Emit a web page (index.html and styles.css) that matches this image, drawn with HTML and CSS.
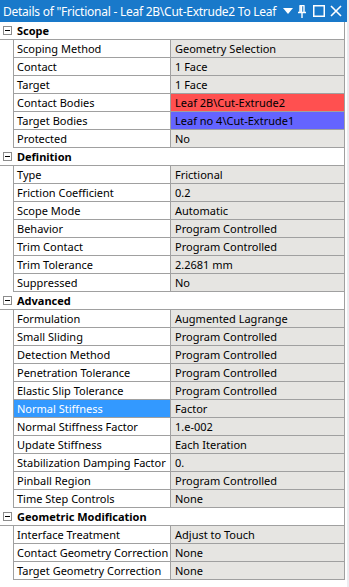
FILE: index.html
```html
<!DOCTYPE html>
<html lang="en">
<head>
    <meta charset="UTF-8">
    <meta name="viewport" content="width=device-width, initial-scale=1.0">
    <title>Details of Frictional contact</title>
    <link rel="stylesheet" href="styles.css">
</head>
<body>
    <div class="panel">
        <div class="titlebar">
            <span class="title">Details of "Frictional - Leaf 2B\Cut-Extrude2 To Leaf</span>
            <div class="tools">
                <svg width="10" height="7" viewBox="0 0 10 7"><path d="M0 0H10L5 6Z" fill="#fff"/></svg>
                <svg width="8" height="13" viewBox="0 0 8 13"><path d="M1.5 0.5H6.5M2 0.5V7M6 0.5V7M0 7.5H8M4 7.5V13M3.5 1V7" stroke="#fff" stroke-width="1.4" fill="none"/></svg>
                <svg class="wide" width="12" height="12" viewBox="0 0 12 12"><rect x="0.75" y="0.75" width="10.5" height="10.5" stroke="#fff" stroke-width="1.5" fill="none"/></svg>
                <svg width="12" height="12" viewBox="0 0 12 12"><path d="M1 1L11 11M11 1L1 11" stroke="#fff" stroke-width="1.6"/></svg>
            </div>
        </div>

        <div class="grid">
            <div class="group-head"><span class="toggle"></span><span class="head-label">Scope</span></div>
            <div class="row"><div class="label">Scoping Method</div><div class="value">Geometry Selection</div></div>
            <div class="row"><div class="label">Contact</div><div class="value">1 Face</div></div>
            <div class="row"><div class="label">Target</div><div class="value">1 Face</div></div>
            <div class="row"><div class="label">Contact Bodies</div><div class="value contact">Leaf 2B\Cut-Extrude2</div></div>
            <div class="row"><div class="label">Target Bodies</div><div class="value target">Leaf no 4\Cut-Extrude1</div></div>
            <div class="row"><div class="label">Protected</div><div class="value">No</div></div>

            <div class="group-head"><span class="toggle"></span><span class="head-label">Definition</span></div>
            <div class="row"><div class="label">Type</div><div class="value">Frictional</div></div>
            <div class="row"><div class="label">Friction Coefficient</div><div class="value">0.2</div></div>
            <div class="row"><div class="label">Scope Mode</div><div class="value">Automatic</div></div>
            <div class="row"><div class="label">Behavior</div><div class="value">Program Controlled</div></div>
            <div class="row"><div class="label">Trim Contact</div><div class="value">Program Controlled</div></div>
            <div class="row"><div class="label">Trim Tolerance</div><div class="value">2.2681 mm</div></div>
            <div class="row"><div class="label">Suppressed</div><div class="value">No</div></div>

            <div class="group-head"><span class="toggle"></span><span class="head-label">Advanced</span></div>
            <div class="row"><div class="label">Formulation</div><div class="value">Augmented Lagrange</div></div>
            <div class="row"><div class="label">Small Sliding</div><div class="value">Program Controlled</div></div>
            <div class="row"><div class="label">Detection Method</div><div class="value">Program Controlled</div></div>
            <div class="row"><div class="label">Penetration Tolerance</div><div class="value">Program Controlled</div></div>
            <div class="row"><div class="label">Elastic Slip Tolerance</div><div class="value">Program Controlled</div></div>
            <div class="row"><div class="label selected">Normal Stiffness</div><div class="value">Factor</div></div>
            <div class="row"><div class="label">Normal Stiffness Factor</div><div class="value">1.e-002</div></div>
            <div class="row"><div class="label">Update Stiffness</div><div class="value">Each Iteration</div></div>
            <div class="row"><div class="label">Stabilization Damping Factor</div><div class="value">0.</div></div>
            <div class="row"><div class="label">Pinball Region</div><div class="value">Program Controlled</div></div>
            <div class="row"><div class="label">Time Step Controls</div><div class="value">None</div></div>

            <div class="group-head"><span class="toggle"></span><span class="head-label">Geometric Modification</span></div>
            <div class="row"><div class="label">Interface Treatment</div><div class="value">Adjust to Touch</div></div>
            <div class="row"><div class="label">Contact Geometry Correction</div><div class="value">None</div></div>
            <div class="row"><div class="label">Target Geometry Correction</div><div class="value">None</div></div>
        </div>
    </div>
</body>
</html>
```

FILE: styles.css
```css
body {
    margin: 0;
    font-family: 'Noto Sans', 'Open Sans', sans-serif;
    font-size: 11px;
    color: #000;
    background: #fff;
}
.panel {
    width: 349px;
    height: 587px;
    box-sizing: border-box;
    border-right: 2px solid #ececf0;
    background: #fff;
}
.titlebar {
    height: 22px;
    display: flex;
    align-items: center;
    background-color: #1979ca;
    color: #fff;
    padding: 0 0 0 3px;
}
.title {
    width: 280px;
    font-size: 12px;
    letter-spacing: -0.25px;
    white-space: nowrap;
    overflow: hidden;
}
.tools {
    display: flex;
    align-items: center;
    gap: 5px;
}
.tools .wide {
    margin-left: 2px;
}
.grid {
    width: 345px;
}
.group-head {
    height: 18px;
    display: flex;
    align-items: center;
    box-sizing: border-box;
    border-bottom: 1px solid #a0a0a0;
    border-right: 1px solid #a0a0a0;
}
.toggle {
    width: 9px;
    height: 9px;
    margin: 0 5px 0 3px;
    box-sizing: border-box;
    border: 1px solid #8c8c8c;
    position: relative;
}
.toggle::after {
    content: '';
    position: absolute;
    left: 1px;
    right: 1px;
    top: 3px;
    height: 1px;
    background: #000;
}
.head-label {
    font-weight: bold;
}
.row {
    height: 18px;
    display: flex;
    margin-left: 13px;
    box-sizing: border-box;
    border-left: 1px solid #a0a0a0;
    border-right: 1px solid #a0a0a0;
    border-bottom: 1px solid #a0a0a0;
}
.label, .value {
    display: flex;
    align-items: center;
    white-space: nowrap;
    overflow: hidden;
}
.label {
    width: 157px;
    padding-left: 3px;
    box-sizing: border-box;
    border-right: 1px solid #a0a0a0;
}
.value {
    flex: 1;
    padding-left: 4px;
    background-color: #e6e5e2;
}
.label.selected {
    background-color: #3399ff;
    color: #fff;
}
.value.contact {
    background-color: #ff5050;
}
.value.target {
    background-color: #6464ff;
}
```
